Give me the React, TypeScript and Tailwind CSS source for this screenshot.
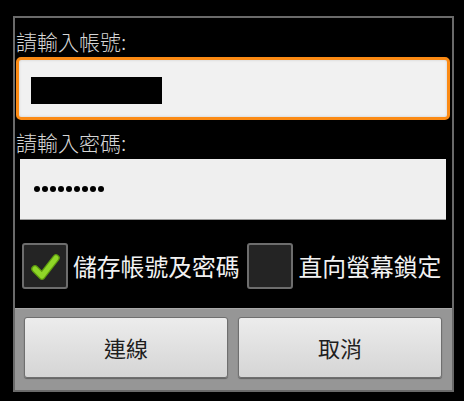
const cjk = { fontFamily: '"Noto Sans CJK TC", "Noto Sans", sans-serif' }

function CheckBox({ checked }: { checked: boolean }) {
  return (
    <div className="w-[46px] h-[46px] shrink-0 rounded-[3px] border-2 border-[#6d6d6d] bg-[#242424] flex items-center justify-center">
      {checked && (
        <svg width="42" height="42" viewBox="0 0 42 42">
          <path d="M11 24 L18 31 L32 13" fill="none" stroke="#5e9c0e" strokeWidth="7.5" strokeLinecap="round" strokeLinejoin="round" />
          <path d="M11 24 L18 31 L32 13" fill="none" stroke="#8fd628" strokeWidth="5" strokeLinecap="round" strokeLinejoin="round" />
        </svg>
      )}
    </div>
  )
}

export default function App() {
  return (
    <div className="w-[464px] h-[401px] bg-black pt-[16px] pl-[13px]" style={cjk}>
      <div className="w-[441px] border-2 border-[#6a6a6a] flex flex-col">
        {/* Account */}
        <div className="mt-[9px] h-[28px] leading-[28px] text-[21px] font-light text-[#d6d6d6] pl-[1px]">請輸入帳號:</div>
        <div className="mt-[2px] ml-[1px] mr-[2px] h-[63px] rounded-[5px] border-[3px] border-[#fb8a14] bg-[#f1f1f1] shadow-[inset_0_0_3px_rgba(0,0,0,0.15)] pl-[12px] pt-[17px]">
          <div className="w-[131px] h-[27px] bg-black" />
        </div>

        {/* Password */}
        <div className="mt-[8px] h-[28px] leading-[28px] text-[21px] font-light text-[#d6d6d6] pl-[1px]">請輸入密碼:</div>
        <div className="mt-[3px] ml-[5px] mr-[6px] h-[61px] bg-[#efefef] border-b border-[#9a9a9a] flex items-center pl-[14px] gap-[2px]">
          {Array.from({ length: 9 }).map((_, i) => (
            <span key={i} className="w-[6px] h-[6px] rounded-full bg-black" />
          ))}
        </div>

        {/* Options */}
        <div className="mt-[23px] h-[46px] flex items-center pl-[7px] text-[23.8px] text-[#f2f2f2]">
          <CheckBox checked />
          <span className="ml-[5px] leading-none">儲存帳號及密碼</span>
          <div className="ml-[7px]">
            <CheckBox checked={false} />
          </div>
          <span className="ml-[6px] leading-none">直向螢幕鎖定</span>
        </div>

        {/* Buttons */}
        <div className="mt-[19px] bg-[#969696] border-t border-[#a8a8a8] pt-[8px] pb-[12px] pl-[9px] pr-[10px] flex gap-[10px]">
          {['連線', '取消'].map((t) => (
            <button
              key={t}
              className="flex-1 h-[61px] rounded-[3px] border border-[#6f6f6f] bg-gradient-to-b from-[#ececec] to-[#d5d5d5] shadow-[0_1px_1px_rgba(0,0,0,0.35)] text-[22px] text-[#1e1e1e] flex items-center justify-center"
            >
              {t}
            </button>
          ))}
        </div>
      </div>
    </div>
  )
}
